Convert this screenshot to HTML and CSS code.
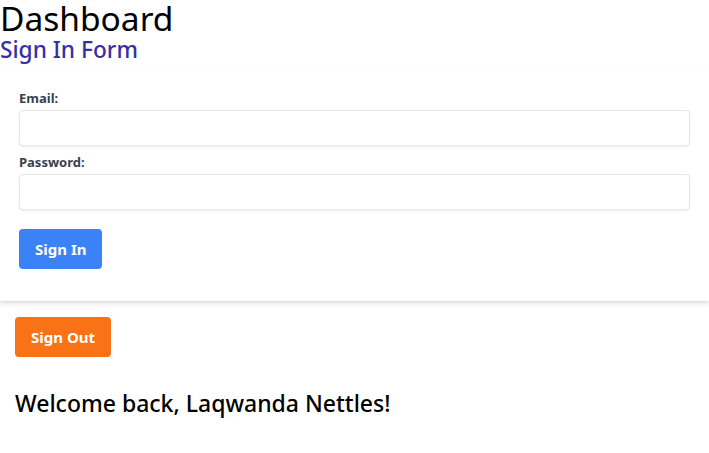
FILE: index.html
```html
<!DOCTYPE html>
<html>
<head>
<meta charset="utf-8">
<link rel="stylesheet" href="styles.css">
</head>
<body>
<h1 class="title">Dashboard</h1>
<h2 class="subtitle">Sign In Form</h2>
<form class="card">
  <label class="label" for="email">Email:</label>
  <input class="input" id="email" type="email">
  <label class="label" for="pw">Password:</label>
  <input class="input" id="pw" type="password">
  <button class="btn btn-blue" type="button">Sign In</button>
</form>
<section class="main">
  <button class="btn btn-orange" type="button">Sign Out</button>
  <p class="welcome">Welcome back, Laqwanda Nettles!</p>
</section>
</body>
</html>
```
FILE: styles.css
```css
html, body { margin: 0; padding: 0; background: #fff; }
body { font-family: "Noto Sans", "Open Sans", sans-serif; color: #000; }
.title { margin: 0; font-size: 33.5px; font-weight: 400; line-height: 36px; }
.subtitle { margin: 0; font-size: 22.7px; font-weight: 500; line-height: 28px; color: #3730a3; }
.card {
  margin-top: 6px;
  padding: 20px 19px 32px;
  background: #fff;
  box-shadow: 0 3px 5px rgba(0,0,0,0.1), 0 1px 2px rgba(0,0,0,0.06);
  display: flex; flex-direction: column; align-items: flex-start;
}
.label { font-size: 13px; font-weight: 700; color: #374151; line-height: 16px; margin-bottom: 4px; }
.input {
  box-sizing: border-box; width: 100%; height: 36px; margin: 0 0 8px;
  border: 1px solid #e5e7eb; border-radius: 4px;
  box-shadow: 0 1px 2px rgba(0,0,0,0.08);
  padding: 0 8px; font-size: 14px;
}
.btn {
  border: 0; border-radius: 4px; color: #fff; font-family: inherit;
  font-size: 15px; font-weight: 700; height: 40px; padding: 0 16px; cursor: pointer;
}
.btn-blue { background: #3b82f6; margin-top: 11px; }
.btn-orange { background: #f97316; }
.main { padding: 16px 15px; }
.welcome { margin: 32px 0 0; font-size: 23px; font-weight: 500; line-height: 28px; }
```
